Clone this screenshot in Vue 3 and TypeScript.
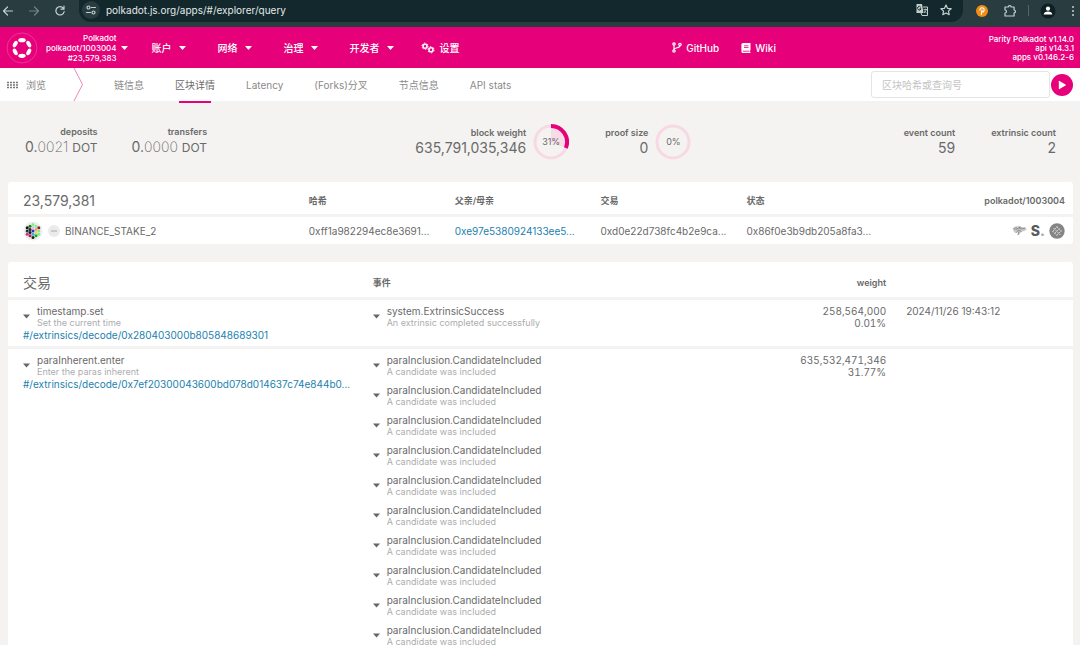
<script setup lang="ts">
import { ref } from 'vue'

interface Dot { x: number; y: number; fill: string }

const url = ref('polkadot.js.org/apps/#/explorer/query')
const query = ref('')
const activeTab = ref('区块详情')

const menu = ['账户', '网络', '治理', '开发者']
const tabs = ['链信息', '区块详情', 'Latency', '(Forks)分叉', '节点信息', 'API stats']

const dots: Dot[] = [
  { x: 0, y: -6.4, fill: '#7df08a' },
  { x: -3, y: -4.8, fill: '#157a1a' },
  { x: 3, y: -4.8, fill: '#7df08a' },
  { x: -5.8, y: -3.2, fill: '#111' },
  { x: 5.8, y: -3.2, fill: '#a01030' },
  { x: 0, y: -3.2, fill: '#e8b8d8' },
  { x: -3, y: -1.6, fill: '#222' },
  { x: 3, y: -1.6, fill: '#e89a80' },
  { x: -5.8, y: 0, fill: '#0d4020' },
  { x: 0, y: 0, fill: '#2030c8' },
  { x: 5.8, y: 0, fill: '#7df08a' },
  { x: -3, y: 1.6, fill: '#1a1030' },
  { x: 3, y: 1.6, fill: '#f0d060' },
  { x: -5.8, y: 3.2, fill: '#e020a0' },
  { x: 5.8, y: 3.2, fill: '#7df08a' },
  { x: 0, y: 3.2, fill: '#30b0c8' },
  { x: -3, y: 4.8, fill: '#b02040' },
  { x: 3, y: 4.8, fill: '#2a9d2a' },
  { x: 0, y: 6.4, fill: '#0a2a10' },
]

const extrinsics = [
  {
    name: 'timestamp.set',
    note: 'Set the current time',
    link: '#/extrinsics/decode/0x280403000b805848689301',
    weight: '258,564,000',
    percent: '0.01%',
    time: '2024/11/26 19:43:12',
    events: [{ name: 'system.ExtrinsicSuccess', note: 'An extrinsic completed successfully' }],
  },
  {
    name: 'paraInherent.enter',
    note: 'Enter the paras inherent',
    link: '#/extrinsics/decode/0x7ef20300043600bd078d014637c74e844b0...',
    weight: '635,532,471,346',
    percent: '31.77%',
    time: '',
    events: Array.from({ length: 10 }, () => ({
      name: 'paraInclusion.CandidateIncluded',
      note: 'A candidate was included',
    })),
  },
]
</script>

<template>
  <div class="page">
    <div class="browser">
      <button class="tool" aria-label="Back"><svg width="12" height="12" viewBox="0 0 12 12"><path d="M10.5 6H2M5.5 2 1.5 6l4 4" class="line" /></svg></button>
      <button class="tool dim" aria-label="Forward"><svg width="12" height="12" viewBox="0 0 12 12"><path d="M1.5 6H10M6.500 2l4 4-4 4" class="line" /></svg></button>
      <button class="tool" aria-label="Reload"><svg width="12" height="12" viewBox="0 0 12 12"><path d="M9.600 3.500A4.200 4.200 0 1 0 10.200 6.500M10 1.200V4.200H7" class="line" /></svg></button>
      <div class="address">
        <button class="site" aria-label="Site information">
          <svg width="12" height="12" viewBox="0 0 12 12"><path d="M6.500 3.500H10.500M1.500 8.500H5.500" class="line" /><circle cx="3.500" cy="3.500" r="1.500" class="line" /><circle cx="8.500" cy="8.500" r="1.500" class="line" /></svg>
        </button>
        <input v-model="url" class="url" type="text" aria-label="Address" />
        <button class="tool" aria-label="Translate">
          <svg width="14" height="14" viewBox="0 0 14 14"><path d="M1.500 1h5.500l1.500 9H1.500z" fill="#c4d0d0" /><path d="M8 4h4.500v8.500H7L6 10" fill="none" stroke="#c4d0d0" /><path d="M5.800 4.300A1.800 1.800 0 1 0 6 5.800H4.500" fill="none" stroke="#12282c" /><path d="M8.500 6.500h3.500M10.200 5.500v1M11.400 6.500c-.4 1.600-1.300 2.600-2.400 3.500M9 7.700l2.500 2.300" fill="none" stroke="#c4d0d0" stroke-width=".8" /></svg>
        </button>
        <button class="tool" aria-label="Bookmark">
          <svg width="14" height="14" viewBox="0 0 14 14"><path d="m7 2 1.500 3.300 3.600.4-2.700 2.400.8 3.600L7 9.900l-3.200 1.800.8-3.600L1.900 5.700l3.600-.4z" class="line" /></svg>
        </button>
      </div>
      <button class="tool ext" aria-label="Extension">
        <svg width="12" height="12" viewBox="0 0 12 12"><circle cx="6" cy="6" r="6" fill="#f18c14" /><path d="M4 5.200A2.100 2.100 0 1 1 6.200 7M6 5 5.300 9.500" fill="none" stroke="#fff" stroke-width="1.100" stroke-linecap="round" /></svg>
      </button>
      <button class="tool puzzle" aria-label="Extensions">
        <svg width="14" height="14" viewBox="0 0 14 14"><path d="M2 3h3.300a1.400 1.400 0 0 1 2.800 0h3v3a1.400 1.400 0 0 1 0 2.800v3.200H2V9a1.500 1.500 0 0 0 0-3z" class="line" /></svg>
      </button>
      <span class="divider"></span>
      <button class="tool avatar" aria-label="Profile">
        <svg width="16" height="16" viewBox="0 0 16 16"><circle cx="8" cy="8" r="7.500" fill="#0e2024" /><circle cx="8" cy="5.700" r="2.100" fill="#fff" /><path d="M3.700 11.500c0-4 8.600-4 8.600 0z" fill="#fff" /></svg>
      </button>
      <button class="tool more" aria-label="Menu">
        <svg width="4" height="12" viewBox="0 0 4 12"><circle cx="2" cy="2" r="1" fill="#c4d0d0" /><circle cx="2" cy="6" r="1" fill="#c4d0d0" /><circle cx="2" cy="10" r="1" fill="#c4d0d0" /></svg>
      </button>
    </div>

    <header class="top">
      <svg class="logo" width="32" height="32" viewBox="0 0 32 32">
        <circle cx="16" cy="16" r="15" fill="none" stroke="#f04a9f" stroke-width=".7" />
        <g fill="#fff">
          <ellipse cx="16" cy="8.200" rx="3.700" ry="2.100" />
          <ellipse cx="16" cy="23.800" rx="3.700" ry="2.100" />
          <ellipse cx="16" cy="8.200" rx="3.500" ry="2" transform="rotate(60 16 16)" />
          <ellipse cx="16" cy="8.200" rx="3.500" ry="2" transform="rotate(120 16 16)" />
          <ellipse cx="16" cy="8.200" rx="3.500" ry="2" transform="rotate(240 16 16)" />
          <ellipse cx="16" cy="8.200" rx="3.500" ry="2" transform="rotate(300 16 16)" />
        </g>
      </svg>
      <button class="chain">
        <span class="chain-text">Polkadot<br />polkadot/1003004<br />#23,579,383</span>
        <svg class="caret" width="7" height="4" viewBox="0 0 7 4"><path d="M0 0h7L3.500 4z" /></svg>
      </button>
      <nav class="menu">
        <button v-for="item in menu" :key="item" class="menu-item">
          {{ item }}
          <svg class="caret" width="7" height="4" viewBox="0 0 7 4"><path d="M0 0h7L3.500 4z" /></svg>
        </button>
      </nav>
      <a class="menu-item settings" href="#/settings">
        <svg width="14" height="12" viewBox="0 0 14 12">
          <g fill="none" stroke="#fff">
            <circle cx="4" cy="4.200" r="2" stroke-width="1.500" />
            <circle cx="4" cy="4.200" r="3.100" stroke-dasharray="1.600 1.650" />
            <circle cx="10" cy="7.800" r="2" stroke-width="1.500" />
            <circle cx="10" cy="7.800" r="3.100" stroke-dasharray="1.600 1.650" />
          </g>
        </svg>
        设置
      </a>
      <nav class="links">
        <a href="#github">
          <svg width="10" height="11" viewBox="0 0 10 11"><g fill="none" stroke="#fff" stroke-width="1.200"><circle cx="2" cy="2" r="1.200" /><circle cx="2" cy="9" r="1.200" /><circle cx="8" cy="2.500" r="1.200" /><path d="M2 3.200v4.600M8 3.700c0 2.500-4.500 1.500-5.800 3.300" /></g></svg>
          GitHub
        </a>
        <a href="#wiki">
          <svg width="10" height="10" viewBox="0 0 10 10"><path d="M2 0h7.500v7.500H9v1.500h.5v1H2A1.600 1.600 0 0 1 .4 8.400V1.600A1.600 1.600 0 0 1 2 0z" fill="#fff" /><path d="M3 2.800h4.500M3 4.500h4.500M2 8.200h6.500" stroke="#e6007a" stroke-width=".8" /></svg>
          Wiki
        </a>
      </nav>
      <div class="versions">Parity Polkadot v1.14.0<br />api v14.3.1<br />apps v0.146.2-6</div>
    </header>

    <div class="tabbar">
      <div class="section">
        <svg width="11" height="8" viewBox="0 0 11 8"><path d="M0 1.500h11M0 4h11M0 6.500h11" stroke="#777" stroke-width="1.500" stroke-dasharray="2 1" /></svg>
        浏览
      </div>
      <svg class="chevron" width="11" height="33" viewBox="0 0 11 33"><path d="M1 0 9.500 16.500 1 33" fill="none" stroke="#f283b9" /></svg>
      <nav class="tabs">
        <button v-for="tab in tabs" :key="tab" class="tab" :class="{ active: tab === activeTab }" @click="activeTab = tab">{{ tab }}</button>
      </nav>
      <form class="search" @submit.prevent>
        <input v-model="query" type="text" placeholder="区块哈希或查询号" aria-label="区块哈希或查询号" />
        <button class="play" aria-label="查询"><svg width="8" height="10" viewBox="0 0 8 10"><path d="M.8 1.300v7.400q0 .8.700.400l6-3.600q.6-.5 0-1l-6-3.600Q.8.500.8 1.300z" fill="#fff" /></svg></button>
      </form>
    </div>

    <main class="content">
      <section class="summary">
        <div class="group balances">
          <div class="stat"><h2>deposits</h2><p>0.<span class="thin">0021</span> <small>DOT</small></p></div>
          <div class="stat"><h2>transfers</h2><p>0.<span class="thin">0000</span> <small>DOT</small></p></div>
        </div>
        <div class="group usage">
          <div class="gauge">
            <div class="stat"><h2>block weight</h2><p>635,791,035,346</p></div>
            <div class="ring">
              <svg viewBox="0 0 36 36"><circle cx="18" cy="18" r="16" class="track" /><path d="M18 18V2A16 16 0 0 1 32.900 23.900z" fill="#f7dbe7" /><path d="M18 2A16 16 0 0 1 32.900 23.900" fill="none" stroke="#e6007a" stroke-width="4" /></svg>
              <span>31%</span>
            </div>
          </div>
          <div class="gauge">
            <div class="stat"><h2>proof size</h2><p>0</p></div>
            <div class="ring">
              <svg viewBox="0 0 36 36"><circle cx="18" cy="18" r="16" class="track" /></svg>
              <span>0%</span>
            </div>
          </div>
        </div>
        <div class="group">
          <div class="stat"><h2>event count</h2><p>59</p></div>
          <div class="stat"><h2>extrinsic count</h2><p>2</p></div>
        </div>
      </section>

      <table class="block">
        <thead>
          <tr>
            <th class="title">23,579,381</th><th>哈希</th><th>父亲/母亲</th><th>交易</th><th>状态</th><th class="right">polkadot/1003004</th>
          </tr>
        </thead>
        <tbody>
          <tr>
            <td>
              <div class="account">
                <svg width="20" height="20" viewBox="-10 -10 20 20"><circle r="9.500" fill="#eee" /><circle v-for="(d, i) in dots" :key="i" :cx="d.x" :cy="d.y" r="1.500" :fill="d.fill" /></svg>
                <svg width="12" height="12" viewBox="0 0 12 12"><circle cx="6" cy="6" r="6" fill="#ebebeb" /><path d="M3 6h6" stroke="#aaa" /></svg>
                <span>BINANCE_STAKE_2</span>
              </div>
            </td>
            <td>0xff1a982294ec8e3691...</td>
            <td><a href="#/explorer/query/parent">0xe97e5380924133ee5...</a></td>
            <td>0xd0e22d738fc4b2e9ca...</td>
            <td>0x86f0e3b9db205a8fa3...</td>
            <td>
              <div class="explorers">
                <a href="#statescan" aria-label="Statescan">
                  <svg width="15" height="12" viewBox="0 0 15 12"><path d="M.5 3.500 3 1.500l4-.5 3 1 4 .5.500 2-2 1.500-2.500.5-2 2-2.500 2 .5-3-3 .5-1.500-2z" fill="#c9c9c9" /><path d="m1.500 3.500 3 1 2.500-2 3 1.500 3-1M4.500 7.500l2-2.500 3 1.500M3.500 2l2 2M8 1.500 7.500 4M6 10l1-3.500" fill="none" stroke="#808080" stroke-width=".8" /></svg>
                </a>
                <a class="subscan" href="#subscan">S<i>.</i></a>
                <a href="#explorer" aria-label="Explorer">
                  <svg width="16" height="16" viewBox="0 0 16 16"><circle cx="8" cy="8" r="7.700" fill="#858585" /><path d="m3.500 8.500 5-5M5.500 10.500l5-5M7.500 12.500l5-5M4.500 5l7 7M7.500 3.500l5 5M3.500 8l4.500 4.500" fill="none" stroke="#d4d4d4" stroke-width="1" stroke-dasharray="2 .8" /></svg>
                </a>
              </div>
            </td>
          </tr>
        </tbody>
      </table>

      <table class="extrinsics">
        <thead>
          <tr><th class="title">交易</th><th>事件</th><th class="right">weight</th><th></th></tr>
        </thead>
        <tbody>
          <tr v-for="ex in extrinsics" :key="ex.name">
            <td>
              <button class="call">
                <svg width="7" height="5" viewBox="0 0 7 5"><path d="M0 .5h7L3.500 4.500z" /></svg>
                <span><b>{{ ex.name }}</b><em>{{ ex.note }}</em></span>
              </button>
              <a class="decode" :href="ex.link">{{ ex.link }}</a>
            </td>
            <td>
              <div class="events">
                <button v-for="(ev, i) in ex.events" :key="i" class="call">
                  <svg width="7" height="5" viewBox="0 0 7 5"><path d="M0 .5h7L3.500 4.500z" /></svg>
                  <span><b>{{ ev.name }}</b><em>{{ ev.note }}</em></span>
                </button>
              </div>
            </td>
            <td class="right weight">{{ ex.weight }}<br />{{ ex.percent }}</td>
            <td>{{ ex.time }}</td>
          </tr>
        </tbody>
      </table>
    </main>
  </div>
</template>

<style>
body { margin: 0; background: #f4f3f1; }
</style>

<style scoped>
* { box-sizing: border-box; }
.page {
  display: flex; flex-direction: column; height: 100vh; overflow: hidden;
  background: #f4f3f1; color: #6a6a6a;
  font: 10px/12px Inter, "Noto Sans CJK SC", sans-serif;
}
button, input { font: inherit; color: inherit; border: 0; padding: 0; margin: 0; background: none; }
button { cursor: pointer; }
svg { display: block; flex: none; }
a { color: #1b81ae; text-decoration: none; }
h2, p { margin: 0; }
.line { fill: none; stroke: currentColor; stroke-width: 1.2; stroke-linecap: round; stroke-linejoin: round; }

.browser { flex: none; display: flex; align-items: center; height: 27px; padding: 0 1px 6px 2px; background: #293c40; color: #c4d0d0; }
.tool { display: grid; place-items: center; width: 12px; height: 20px; }
.browser > .tool:nth-child(-n + 3) { margin-right: 14px; }
.dim { color: #71858a; }
.address { flex: 1; display: flex; align-items: center; gap: 12px; height: 23px; margin: -1px 13px 0 -1px; padding: 0 12px 0 3px; border-radius: 0 0 12px 12px; background: #12282c; }
.site { display: grid; place-items: center; width: 18px; height: 18px; border-radius: 50%; background: #293c40; }
.url { flex: 1; min-width: 0; margin-left: -6px; color: #e3e9e9; outline: 0; }
.puzzle { margin-left: 15px; }
.divider { width: 1px; height: 11px; margin-left: 13px; background: #53666a; }
.avatar { margin-left: 11px; }
.more { margin-left: 15px; }

.top { flex: none; display: flex; align-items: center; height: 41px; padding: 0 6px; background: #e6007a; color: #fff; font-weight: 500; }
.chain { display: flex; align-items: center; gap: 4px; margin-left: 8px; }
.chain-text { font-size: 8px; line-height: 10px; text-align: right; }
.caret { fill: #fff; }
.menu { display: flex; gap: 32px; margin-left: 24px; }
.menu-item { display: flex; align-items: center; gap: 7px; color: #fff; }
.settings { gap: 5px; margin-left: 27px; }
.links { display: flex; gap: 22px; margin: 0 auto; }
.links a { display: flex; align-items: center; gap: 4px; color: #fff; }
.versions { padding-top: 2px; font-size: 8px; line-height: 9px; text-align: right; }

.tabbar { flex: none; display: flex; align-items: center; height: 33px; padding: 0 7px; background: #fff; color: #8a8a8a; }
.section { display: flex; align-items: center; gap: 8px; }
.chevron { margin-left: 27px; }
.tabs { display: flex; align-self: stretch; gap: 31px; margin-left: 30px; }
.tab { position: relative; white-space: nowrap; }
.tab.active { color: #6a6a6a; }
.tab.active::after { content: ""; position: absolute; left: 10%; right: 10%; bottom: -2px; height: 2px; background: #e6007a; }
.search { display: flex; align-items: center; gap: 1px; margin-left: auto; }
.search input { width: 179px; height: 27px; padding: 0 10px; border: 1px solid #e4e4e4; border-radius: 3px; background: #fff; }
.search input::placeholder { color: #c4c4c4; opacity: 1; }
.play { display: grid; place-items: center; width: 22px; height: 22px; border-radius: 50%; background: #e6007a; }

.content { flex: 1; min-height: 0; overflow: hidden; padding: 0 7px 0 8px; }
.summary { display: flex; justify-content: space-between; align-items: center; height: 81px; padding: 0 17px; }
.group { display: flex; gap: 36px; }
.balances { gap: 34px; }
.usage { margin-right: 4px; }
.gauge { display: flex; align-items: center; gap: 7px; }
.stat { display: flex; flex-direction: column; justify-content: center; text-align: right; }
.stat h2 { font-size: 9px; line-height: 12px; font-weight: 600; }
.stat p { font-size: 14px; line-height: 18px; }
.stat small { font-size: 12px; }
.thin { font-weight: 200; }
.ring { position: relative; width: 36px; height: 36px; }
.ring span { position: absolute; inset: 0; display: grid; place-items: center; font-size: 9px; }
.track { fill: none; stroke: #f6d9e4; stroke-width: 3; }

table { width: 100%; table-layout: fixed; border-collapse: separate; border-spacing: 0; border-radius: 3px; overflow: hidden; background: #fff; }
th, td { padding: 0 10px; text-align: left; font-weight: 400; white-space: nowrap; }
th { font-size: 9px; font-weight: 600; border-bottom: 3px solid #f4f3f1; }
th:first-child, td:first-child { padding-left: 15px; }
th.title { font-size: 14px; font-weight: 400; line-height: 18px; }
.right { text-align: right; }
.weight { font-variant-numeric: tabular-nums; }
.block { margin-bottom: 18px; }
.block th { height: 35px; padding-top: 5px; width: 13.7%; }
.block th:first-child { width: 27.3%; }
.block th:last-child { width: 17.9%; }
.block td { height: 27px; }
.block th:last-child, .block td:last-child { padding-right: 8px; }
.account { display: flex; align-items: center; gap: 5px; }
.explorers { display: flex; align-items: center; justify-content: flex-end; gap: 4px; }
.subscan { color: #5a5a5a; font-size: 14px; font-weight: 800; }
.subscan i { color: #aaa; font-style: normal; }

.extrinsics th { height: 38px; padding-top: 6px; }
.extrinsics th:nth-child(1) { width: 33.3%; }
.extrinsics th:nth-child(2) { width: 32.2%; }
.extrinsics th:nth-child(3) { width: 17.9%; }
.extrinsics td { padding-top: 5px; padding-bottom: 4px; vertical-align: top; border-bottom: 3px solid #f4f3f1; }
.extrinsics td:first-child { padding-right: 0; }
.call { display: flex; align-items: center; gap: 7px; text-align: left; }
.call svg { fill: #666; }
.call b, .call em { display: block; font-weight: 400; font-style: normal; }
.call b { line-height: 13px; }
.call em { font-size: 9px; line-height: 10px; color: #adadad; }
.decode { display: block; margin-top: 1px; line-height: 13px; }
.events { display: grid; gap: 7px; }
</style>
